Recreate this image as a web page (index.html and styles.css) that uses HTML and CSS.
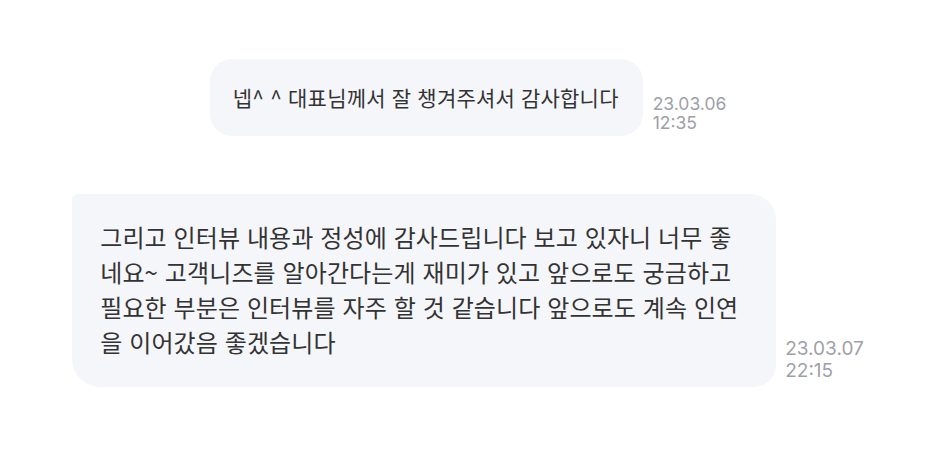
FILE: index.html
```html
<!DOCTYPE html>
<html lang="ko">
<head>
  <meta charset="UTF-8">
  <title>메시지</title>
  <link rel="stylesheet" href="styles.css">
</head>
<body>

<div class="chat">
  <div class="row">
    <div class="bubble">넵^ ^ 대표님께서 잘 챙겨주셔서 감사합니다</div>
    <div class="time">23.03.06<br>12:35</div>
  </div>

  <div class="row row-lg">
    <div class="bubble bubble-lg">그리고 인터뷰 내용과 정성에 감사드립니다 보고 있자니 너무 좋네요~ 고객니즈를 알아간다는게 재미가 있고 앞으로도 궁금하고 필요한 부분은 인터뷰를 자주 할 것 같습니다 앞으로도 계속 인연을 이어갔음 좋겠습니다</div>
    <div class="time time-lg">23.03.07<br>22:15</div>
  </div>
</div>

</body>
</html>
```

FILE: styles.css
```css
body {
  margin: 0;
  background: #fff;
  font-family: "Noto Sans CJK KR", "Noto Sans", sans-serif;
  color: #333;
}
.chat {
  display: flex;
  flex-direction: column;
  align-items: center;
  gap: 58px;
  padding-top: 59px;
}
.row {
  display: flex;
  align-items: flex-end;
  gap: 10px;
}
.row-lg {
  gap: 9px;
}
.bubble {
  background: #f5f6fa;
  border-radius: 22px;
  padding: 24px 24px 24px 23px;
  font-size: 21px;
  line-height: 29px;
  letter-spacing: 0.2px;
  white-space: nowrap;
}
.bubble-lg {
  box-sizing: border-box;
  width: 704px;
  padding: 25px 31px 28px 28px;
  border-radius: 6px 26px 22px 28px;
  font-size: 24px;
  line-height: 35px;
  letter-spacing: 0.1px;
  white-space: normal;
}
.time {
  font-family: Inter, "Noto Sans", sans-serif;
  font-size: 17.5px;
  line-height: 19px;
  color: #9f9fa8;
  padding-bottom: 4px;
}
.time-lg {
  font-size: 19px;
  line-height: 22px;
  padding-bottom: 5px;
}
```
